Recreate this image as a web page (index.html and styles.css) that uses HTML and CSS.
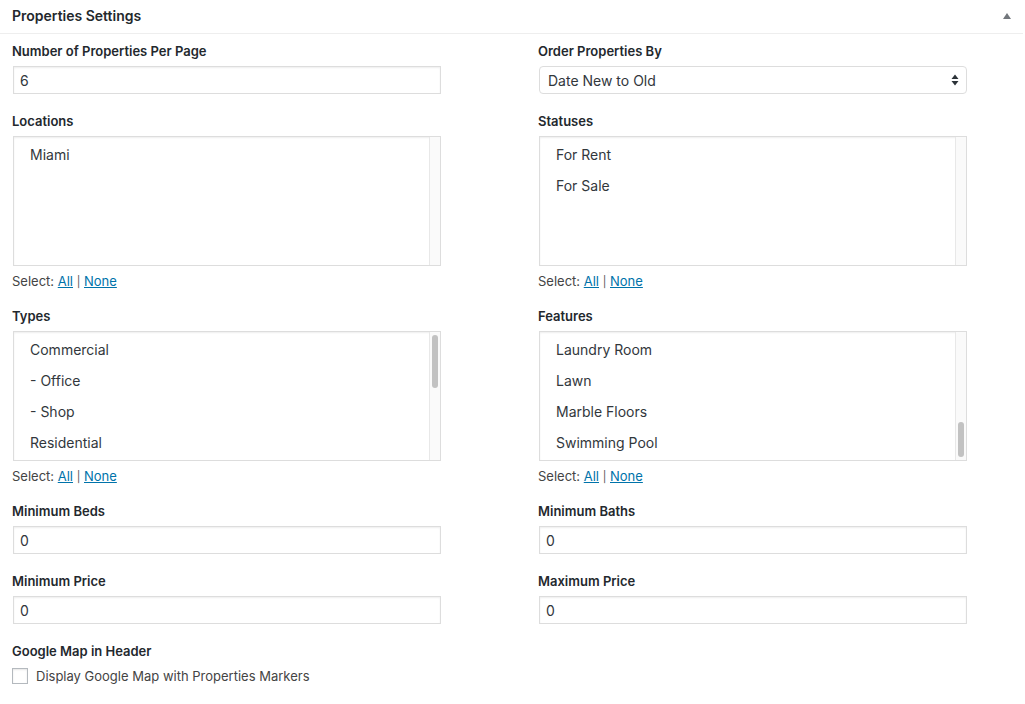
FILE: index.html
```html
<!DOCTYPE html>
<html>
<head>
<meta charset="utf-8">
<link rel="stylesheet" href="styles.css">
</head>
<body>
<div class="panel">
  <div class="panel-head">
    <h2 class="panel-title">Properties Settings</h2>
    <span class="toggle"></span>
  </div>
  <div class="panel-body">
    <div class="grid">
      <div class="field">
        <div class="label">Number of Properties Per Page</div>
        <div class="input">6</div>
      </div>
      <div class="field">
        <div class="label">Order Properties By</div>
        <div class="input select">
          <span>Date New to Old</span>
          <svg class="updown" width="8" height="12" viewBox="0 0 8 12"><path d="M4 0.5 L7.5 5 L0.5 5 Z M4 11.5 L7.5 7 L0.5 7 Z" fill="#2c3338"/></svg>
        </div>
      </div>

      <div class="field">
        <div class="label">Locations</div>
        <div class="list">
          <div class="items">
            <div class="item">Miami</div>
          </div>
          <div class="track"></div>
        </div>
        <div class="selectline">Select: <a>All</a> <span class="sep">|</span> <a>None</a></div>
      </div>
      <div class="field">
        <div class="label">Statuses</div>
        <div class="list">
          <div class="items">
            <div class="item">For Rent</div>
            <div class="item">For Sale</div>
          </div>
          <div class="track"></div>
        </div>
        <div class="selectline">Select: <a>All</a> <span class="sep">|</span> <a>None</a></div>
      </div>

      <div class="field">
        <div class="label">Types</div>
        <div class="list">
          <div class="items">
            <div class="item">Commercial</div>
            <div class="item">- Office</div>
            <div class="item">- Shop</div>
            <div class="item">Residential</div>
          </div>
          <div class="track"><div class="thumb thumb-top"></div></div>
        </div>
        <div class="selectline">Select: <a>All</a> <span class="sep">|</span> <a>None</a></div>
      </div>
      <div class="field">
        <div class="label">Features</div>
        <div class="list">
          <div class="items">
            <div class="item">Laundry Room</div>
            <div class="item">Lawn</div>
            <div class="item">Marble Floors</div>
            <div class="item">Swimming Pool</div>
          </div>
          <div class="track track-end"><div class="thumb thumb-bottom"></div></div>
        </div>
        <div class="selectline">Select: <a>All</a> <span class="sep">|</span> <a>None</a></div>
      </div>

      <div class="field">
        <div class="label">Minimum Beds</div>
        <div class="input">0</div>
      </div>
      <div class="field">
        <div class="label">Minimum Baths</div>
        <div class="input">0</div>
      </div>

      <div class="field">
        <div class="label">Minimum Price</div>
        <div class="input">0</div>
      </div>
      <div class="field">
        <div class="label">Maximum Price</div>
        <div class="input">0</div>
      </div>

      <div class="field field-wide">
        <div class="label">Google Map in Header</div>
        <label class="check"><span class="box"></span>Display Google Map with Properties Markers</label>
      </div>
    </div>
  </div>
</div>
</body>
</html>
```
FILE: styles.css
```css
* { box-sizing: border-box; }
html, body { margin: 0; padding: 0; background: #fff; }
body {
  font-family: "Inter", "Roboto", "Liberation Sans", sans-serif;
  color: #32373c;
  font-size: 13px;
}
.panel { width: 1023px; }
.panel-head {
  height: 34px;
  border-bottom: 1px solid #eeeeee;
  display: flex;
  align-items: center;
  justify-content: space-between;
  padding: 0 12px;
}
.panel-title {
  margin: 0;
  font-size: 14px;
  font-weight: 600;
  color: #23282d;
  line-height: 1;
  padding-bottom: 2px;
}
.toggle {
  width: 0; height: 0;
  border-left: 4px solid transparent;
  border-right: 4px solid transparent;
  border-bottom: 6px solid #72777c;
  margin-right: 0;
  margin-top: -2px;
}
.panel-body { padding: 8px 12px 0 12px; }
.grid {
  display: grid;
  grid-template-columns: 526px 429px;
  row-gap: 18px;
}
.field { display: flex; flex-direction: column; }
.field-wide { grid-column: 1 / -1; }
.label {
  font-weight: 600;
  font-size: 13px;
  line-height: 18px;
  color: #23282d;
  margin-bottom: 6px;
}
.input {
  width: 428px;
  height: 28px;
  border: 1px solid #dddddd;
  box-shadow: inset 0 1px 2px rgba(0,0,0,0.07);
  margin-left: 1px;
  font-size: 14px;
  line-height: 26px;
  padding: 1px 6px 0 6px;
  color: #32373c;
}
.select {
  border-radius: 4px;
  display: flex;
  align-items: center;
  justify-content: space-between;
  padding: 1px 7px 0 8px;
  box-shadow: none;
}
.updown { display: block; margin-top: -1px; }
.list {
  width: 428px;
  height: 130px;
  margin-left: 1px;
  border: 1px solid #dddddd;
  box-shadow: inset 0 1px 2px rgba(0,0,0,0.07);
  display: flex;
  overflow: hidden;
}
.items { flex: 1; padding-top: 2px; }
.item {
  font-size: 14px;
  line-height: 31px;
  padding-left: 16px;
  color: #32373c;
}
.track {
  width: 11px;
  border-left: 1px solid #e8e8e8;
  background: #fafafa;
  display: flex;
  flex-direction: column;
  align-items: center;
  padding: 3px 0;
}
.track-end { justify-content: flex-end; }
.thumb {
  width: 6px;
  border-radius: 3px;
  background: #c2c2c2;
}
.thumb-top { height: 53px; }
.thumb-bottom { height: 35px; }
.selectline {
  margin-top: 6px;
  height: 17px;
  padding-top: 1px;
  overflow: hidden;
  font-size: 13px;
  line-height: 16px;
  color: #444;
}
.selectline .sep { font-size: 11px; line-height: 1; color: #555; }
.selectline a { color: #0073aa; text-decoration: underline; }
.check {
  display: flex;
  align-items: center;
  margin-top: 2px;
  font-size: 13px;
  line-height: 16px;
  color: #444;
}
.box {
  width: 16px; height: 16px;
  border: 1px solid #b4b9be;
  background: #fff;
  box-shadow: inset 0 1px 2px rgba(0,0,0,0.1);
  margin-right: 8px;
}
```
